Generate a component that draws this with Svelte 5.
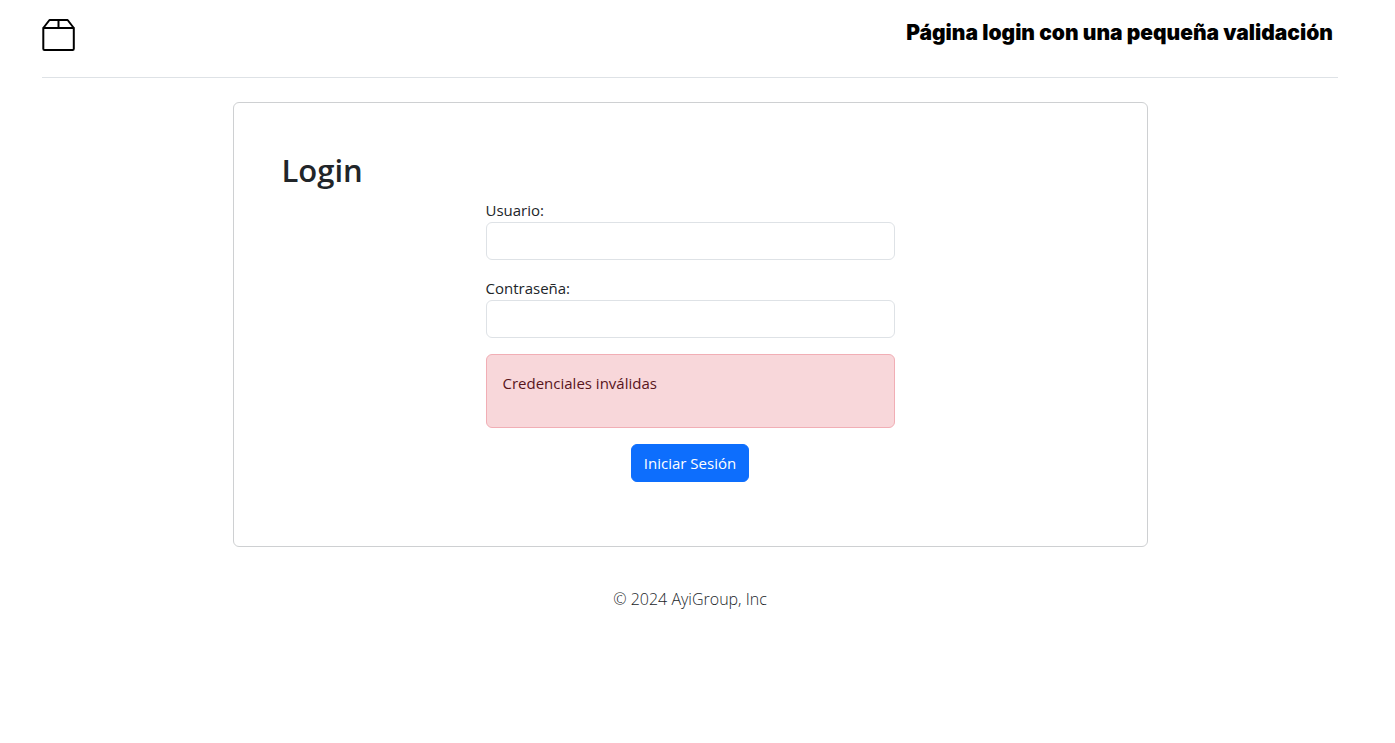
<script>
  let user = $state('');
  let password = $state('');
  let error = $state('Credenciales inválidas');

  function submit(event) {
    event.preventDefault();
    error = 'Credenciales inválidas';
  }
</script>

<div class="page">
  <header>
    <a class="brand" href="#inicio" aria-label="Inicio">
      <svg width="34" height="34" viewBox="0 0 34 34" fill="none" stroke="#000" stroke-width="2" stroke-linejoin="round" aria-hidden="true">
        <path d="M1.300 10V30.800Q1.300 32 2.500 32H30.600Q31.800 32 31.800 30.800V10Z" />
        <path d="M1.300 10L7.500 2H25.600L31.800 10M16.500 2V10" />
      </svg>
    </a>
    <p class="title">Página login con una pequeña validación</p>
  </header>

  <main class="card">
    <h2>Login</h2>
    <form onsubmit={submit}>
      <div class="field">
        <label for="user">Usuario:</label>
        <input id="user" type="text" bind:value={user} />
      </div>
      <div class="field">
        <label for="password">Contraseña:</label>
        <input id="password" type="password" bind:value={password} />
      </div>
      {#if error}
        <div class="alert" role="alert"><p>{error}</p></div>
      {/if}
      <button type="submit">Iniciar Sesión</button>
    </form>
  </main>

  <footer>© 2024 AyiGroup, Inc</footer>
</div>

<style>
  :global(body) {
    margin: 0;
    background: #fff;
  }

  .page,
  .page * {
    box-sizing: border-box;
  }

  .page {
    max-width: 1335px;
    margin: 0 auto;
    padding: 16px 27px 0 12px;
    color: #212529;
    font-family: 'Open Sans', 'Noto Sans', sans-serif;
    font-size: 15px;
    line-height: 24px;
  }

  header {
    display: flex;
    justify-content: space-between;
    align-items: flex-start;
    height: 62px;
    margin-bottom: 24px;
    border-bottom: 1px solid #dee2e6;
  }

  .brand {
    display: flex;
    padding-top: 2px;
  }

  .title {
    margin: 0;
    padding: 5px 5px 0 0;
    color: #000;
    font-family: 'Inter', Arial, sans-serif;
    font-size: 21px;
    font-weight: 900;
  }

  .card {
    max-width: 915px;
    margin: 0 auto;
    padding: 48px 48px 64px;
    border: 1px solid #ced0d2;
    border-radius: 6px;
  }

  h2 {
    margin: 0 0 8px;
    font-size: 31px;
    font-weight: 600;
    line-height: 39px;
  }

  form {
    display: flex;
    flex-direction: column;
    gap: 16px;
    max-width: 409px;
    margin: 0 auto;
  }

  .field {
    display: flex;
    flex-direction: column;
  }

  input {
    width: 100%;
    height: 38px;
    padding: 6px 12px;
    border: 1px solid #dee2e6;
    border-radius: 6px;
    background: #fff;
    color: inherit;
    font: inherit;
  }

  .alert {
    padding: 16px;
    border: 1px solid #f1aeb5;
    border-radius: 6px;
    background: #f8d7da;
    color: #58151c;
  }

  .alert p {
    margin: 0 0 16px;
  }

  button {
    align-self: center;
    height: 38px;
    padding: 6px 12px;
    border: 1px solid #0d6efd;
    border-radius: 6px;
    background: #0d6efd;
    color: #fff;
    font: inherit;
    cursor: pointer;
  }

  footer {
    margin-top: 40px;
    color: #212529;
    font-size: 16px;
    font-weight: 300;
    text-align: center;
  }
</style>
